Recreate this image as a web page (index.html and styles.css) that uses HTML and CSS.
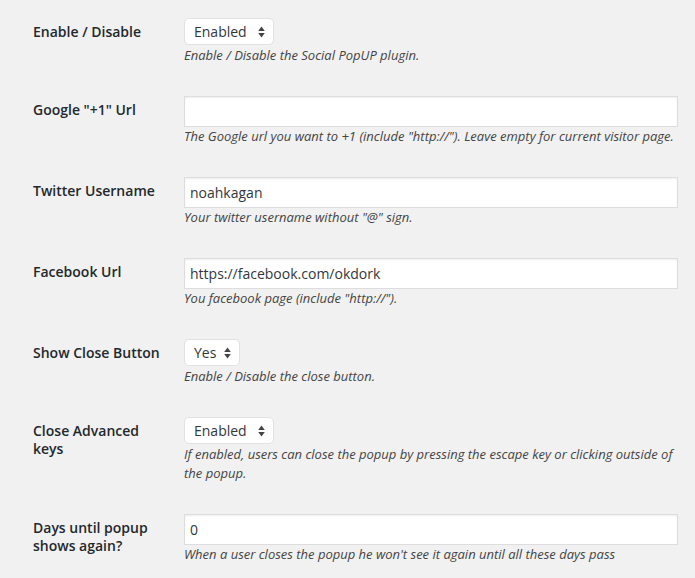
FILE: index.html
```html
<!DOCTYPE html>
<html>
<head>
<meta charset="utf-8">
<link rel="stylesheet" href="styles.css">
</head>
<body>
<div class="form-table">
  <div class="row">
    <div class="th">Enable / Disable</div>
    <div class="td">
      <span class="select w-enabled">Enabled<svg class="arrows" width="7" height="12" viewBox="0 0 7 12"><path d="M3.5 0.5 L6.8 5 L0.2 5 Z M3.5 11.5 L6.8 7 L0.2 7 Z" fill="#444"/></svg></span>
      <p class="description">Enable / Disable the Social PopUP plugin.</p>
    </div>
  </div>
  <div class="row">
    <div class="th">Google "+1" Url</div>
    <div class="td">
      <div class="input"></div>
      <p class="description">The Google url you want to +1 (include "http://"). Leave empty for current visitor page.</p>
    </div>
  </div>
  <div class="row">
    <div class="th">Twitter Username</div>
    <div class="td">
      <div class="input">noahkagan</div>
      <p class="description">Your twitter username without "@" sign.</p>
    </div>
  </div>
  <div class="row">
    <div class="th">Facebook Url</div>
    <div class="td">
      <div class="input">https://facebook.com/okdork</div>
      <p class="description">You facebook page (include "http://").</p>
    </div>
  </div>
  <div class="row">
    <div class="th">Show Close Button</div>
    <div class="td">
      <span class="select w-yes">Yes<svg class="arrows" width="7" height="12" viewBox="0 0 7 12"><path d="M3.5 0.5 L6.8 5 L0.2 5 Z M3.5 11.5 L6.8 7 L0.2 7 Z" fill="#444"/></svg></span>
      <p class="description">Enable / Disable the close button.</p>
    </div>
  </div>
  <div class="row">
    <div class="th">Close Advanced keys</div>
    <div class="td">
      <span class="select w-enabled">Enabled<svg class="arrows" width="7" height="12" viewBox="0 0 7 12"><path d="M3.5 0.5 L6.8 5 L0.2 5 Z M3.5 11.5 L6.8 7 L0.2 7 Z" fill="#444"/></svg></span>
      <p class="description">If enabled, users can close the popup by pressing the escape key or clicking outside of the popup.</p>
    </div>
  </div>
  <div class="row">
    <div class="th">Days until popup shows again?</div>
    <div class="td">
      <div class="input">0</div>
      <p class="description">When a user closes the popup he won't see it again until all these days pass</p>
    </div>
  </div>
</div>
</body>
</html>
```

FILE: styles.css
```css
html, body {
  margin: 0;
  padding: 0;
  background: #f1f1f1;
}
body {
  font-family: "Open Sans", "Noto Sans", sans-serif;
  color: #444;
  font-size: 14px;
}
.form-table {
  padding: 2px 0 0 33px;
  display: flex;
  flex-direction: column;
}
.row {
  display: flex;
  align-items: flex-start;
}
.th {
  width: 130px;
  padding: 21px 21px 20px 0;
  font-weight: 600;
  font-size: 14px;
  line-height: 1.3;
  color: #23282d;
}
.td {
  width: 494px;
  padding: 16px 0 15px 0;
  display: flex;
  flex-direction: column;
  align-items: flex-start;
}
.select {
  position: relative;
  box-sizing: border-box;
  height: 27px;
  margin-bottom: 1px;
  padding: 0 0 0 9px;
  background: #fff;
  border: 1px solid #e2e2e2;
  border-radius: 5px;
  font-size: 14px;
  line-height: 25px;
  color: #32373c;
}
.w-enabled { width: 90px; }
.w-yes { width: 56px; }
.arrows {
  position: absolute;
  right: 8px;
  top: 7px;
}
.input {
  box-sizing: border-box;
  width: 494px;
  height: 31px;
  padding: 0 5px;
  background: #fff;
  border: 1px solid #dddddd;
  box-shadow: inset 0 1px 2px rgba(0,0,0,0.07);
  font-size: 14px;
  line-height: 29px;
  color: #32373c;
}
.description {
  margin: 0;
  font-size: 13px;
  font-style: italic;
  line-height: 19px;
  color: #444;
}
```
